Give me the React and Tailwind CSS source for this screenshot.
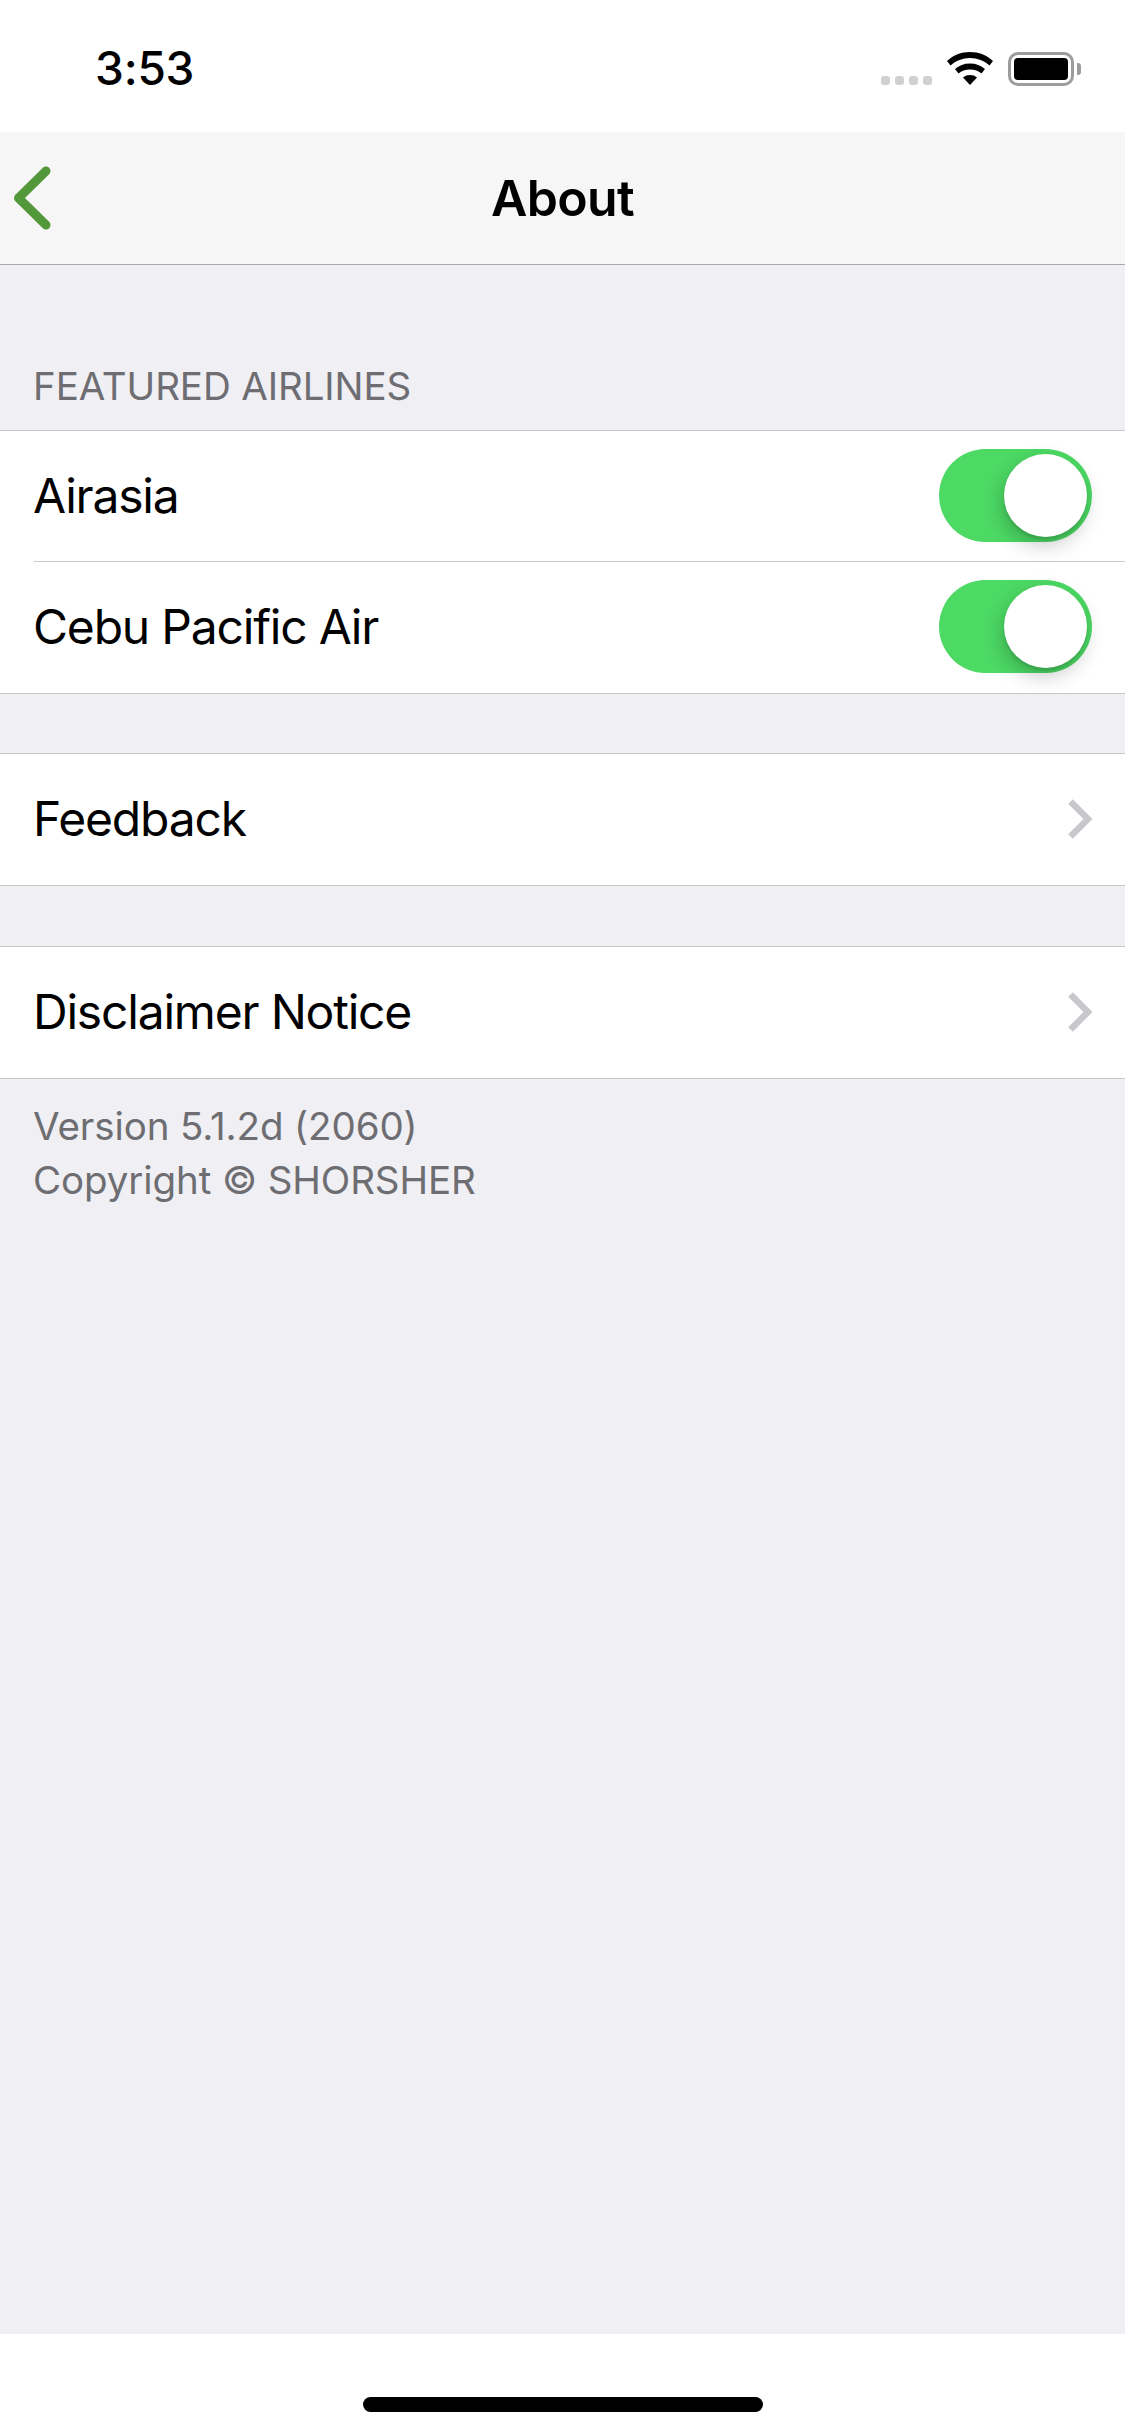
import React from "react";

const font = "font-['Inter','Liberation_Sans',sans-serif]";

function Toggle({ className = "" }) {
  return (
    <div className={"relative w-[153px] h-[93px] rounded-full bg-[#4cd964] " + className}>
      <div className="absolute right-[5px] top-[5px] w-[83px] h-[83px] rounded-full bg-white shadow-[-2px_8px_20px_rgba(0,0,0,0.22),0_3px_3px_rgba(0,0,0,0.1)]" />
    </div>
  );
}

function Chevron() {
  return (
    <svg width="24" height="40" viewBox="0 0 24 40" fill="none" className="mb-[2px]">
      <path d="M2.500 2.500L20 20L2.500 37.500" stroke="#c7c7cc" strokeWidth="6.500" strokeLinejoin="miter" />
    </svg>
  );
}

function Row({ label, children, divider }) {
  return (
    <div className="h-[131px] flex items-center pl-[33px] relative">
      <span className="text-[48px] leading-none tracking-[-1.2px] mb-[2px] text-black">{label}</span>
      <div className="ml-auto flex items-center">{children}</div>
      {divider && <div className="absolute left-[34px] right-0 bottom-0 h-px bg-[#c8c7cc]" />}
    </div>
  );
}

function Group({ className, children }) {
  return <div className={"bg-white border-y border-[#c8c7cc] " + className}>{children}</div>;
}

function StatusBar() {
  return (
    <div className="h-[132px] bg-white flex items-start relative">
      <span className="ml-[95px] mt-[44px] text-[46px] leading-[48px] font-medium tracking-[-0.2px] text-black">3:53</span>
      <div className="ml-auto mr-[44px] mt-[52px] flex items-end">
        <div className="flex gap-[5px] mb-[1px] mr-[15px]">
          <span className="w-[9px] h-[9px] rounded-[3px] bg-[#d0d0d0]" />
          <span className="w-[9px] h-[9px] rounded-[3px] bg-[#d0d0d0]" />
          <span className="w-[9px] h-[9px] rounded-[3px] bg-[#d0d0d0]" />
          <span className="w-[9px] h-[9px] rounded-[3px] bg-[#d0d0d0]" />
        </div>
        <svg width="46" height="33" viewBox="0 0 46 33" className="mr-[15px] mb-[1px]">
          <path d="M23 0C14 0 6.500 3 0 9L3.500 13.500C9 8.800 15.500 6 23 6C30.500 6 37 8.800 42.500 13.500L46 9C39.500 3 32 0 23 0Z" fill="#000" />
          <path d="M23 11.500C17 11.500 12 13.500 8 17L11.500 21.500C14.500 19 18.500 17.500 23 17.500C27.500 17.500 31.500 19 34.500 21.500L38 17C34 13.500 29 11.500 23 11.500Z" fill="#000" />
          <path d="M23 23C20.200 23 18 23.800 16 25.500L23 33L30 25.500C28 23.800 25.800 23 23 23Z" fill="#000" />
        </svg>
        <div className="flex items-center">
          <div className="w-[66px] h-[34px] rounded-[10px] border-[3px] border-[#9c9c9c] p-[3px]">
            <div className="w-full h-full rounded-[4px] bg-black" />
          </div>
          <div className="w-[4px] h-[12px] rounded-r-[3px] bg-[#9c9c9c] ml-[3px]" />
        </div>
      </div>
    </div>
  );
}

export default function App() {
  return (
    <div className={"w-[1125px] h-[2436px] flex flex-col bg-[#efeff4] overflow-hidden " + font}>
      <StatusBar />

      <div className="h-[133px] bg-[#f6f6f6] border-b border-[#a9a9ab] flex items-center justify-center relative">
        <svg width="40" height="66" viewBox="0 0 40 66" fill="none" className="absolute left-[11px] top-[33px]">
          <path d="M35 6L7.500 33L35 60" stroke="#53973b" strokeWidth="9" strokeLinecap="round" strokeLinejoin="round" />
        </svg>
        <span className="text-[50px] leading-none font-semibold tracking-[-0.7px] text-black">About</span>
      </div>

      <div className="h-[165px] flex items-end pl-[33px] pb-[25px]">
        <span className="text-[38.500px] leading-none tracking-[-0.1px] text-[#6d6d72]">FEATURED AIRLINES</span>
      </div>

      <Group>
        <Row label="Airasia" divider>
          <div className="mr-[33px]"><Toggle className="mb-[3px]" /></div>
        </Row>
        <Row label="Cebu Pacific Air">
          <div className="mr-[33px]"><Toggle className="mb-[2px]" /></div>
        </Row>
      </Group>

      <Group className="mt-[59px]">
        <Row label="Feedback">
          <div className="mr-[33px]"><Chevron /></div>
        </Row>
      </Group>

      <Group className="mt-[60px]">
        <Row label="Disclaimer Notice">
          <div className="mr-[33px]"><Chevron /></div>
        </Row>
      </Group>

      <div className="pl-[33px] pt-[20px] text-[38.500px] leading-[54px] tracking-[-0.1px] text-[#6d6d72]">
        <div>Version 5.1.2d (2060)</div>
        <div>Copyright © SHORSHER</div>
      </div>

      <div className="mt-auto h-[102px] bg-white flex justify-center pt-[63px]">
        <div className="w-[400px] h-[15px] rounded-full bg-black" />
      </div>
    </div>
  );
}
